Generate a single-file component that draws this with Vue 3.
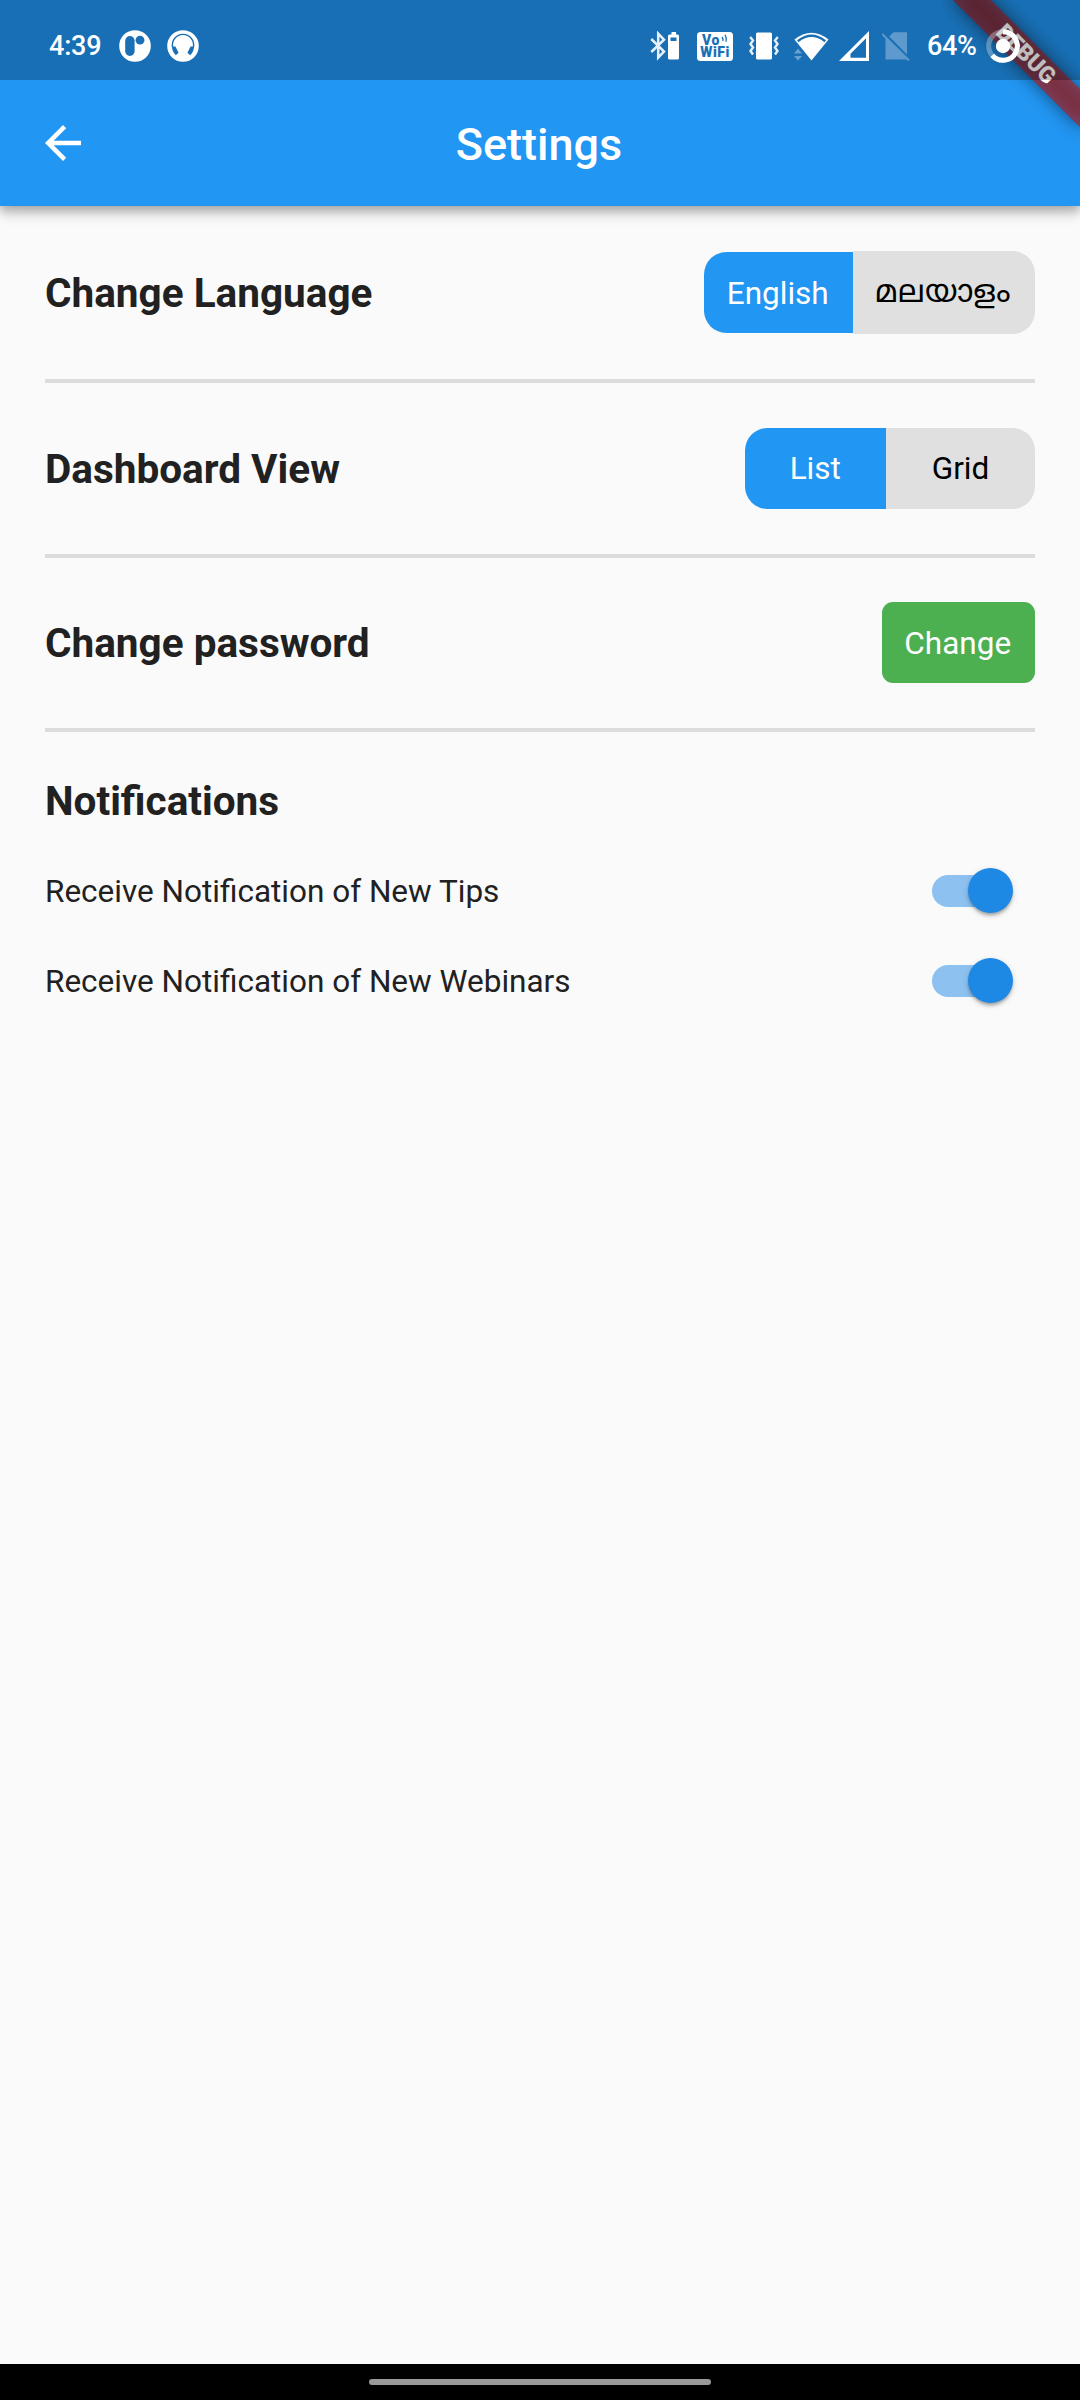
<script setup>
import { ref } from 'vue'

const language = ref('en')
const view = ref('list')
const notifications = ref([
  { id: 'tips', label: 'Receive Notification of New Tips', on: true },
  { id: 'webinars', label: 'Receive Notification of New Webinars', on: true },
])
</script>

<template>
  <div class="screen">
    <div class="debug">
      <div class="banner"><span>DEBUG</span></div>
    </div>

    <div class="status">
      <span class="clock">4:39</span>
      <svg class="i-app" width="32" height="32" viewBox="0 0 32 32">
        <circle cx="16" cy="16" r="15.8" fill="#fff" />
        <rect x="6.2" y="6" width="9.4" height="20" rx="4.7" fill="#1a6fb5" />
        <circle cx="21" cy="10.2" r="4.4" fill="#1a6fb5" />
      </svg>
      <svg class="i-head" width="32" height="32" viewBox="0 0 32 32">
        <circle cx="16" cy="16" r="15.8" fill="#fff" />
        <path d="M5.6 17A10.6 10.6 0 1 1 26.4 17" fill="none" stroke="#1a6fb5" stroke-width="1.4" />
        <path d="M4.9 16.5L8.4 16.5L11.6 22.8L8.8 25.2Q5.2 22 4.9 16.5ZM27.1 16.5L23.6 16.5L20.4 22.8L23.2 25.2Q26.8 22 27.1 16.5Z" fill="#1a6fb5" />
      </svg>

      <div class="system">
        <svg width="30" height="30" viewBox="0 0 30 30">
          <path d="M1.3 8L14 20.5L8.2 26.6V2.6L14 8.6L1.3 21" fill="none" stroke="#e8f1f9" stroke-width="2.5" />
          <path d="M21.5 1h4.5v2.5h1.5a1.5 1.5 0 0 1 1.5 1.5v22a1.5 1.5 0 0 1-1.5 1.5h-8a1.5 1.5 0 0 1-1.5-1.5v-22a1.5 1.5 0 0 1 1.5-1.5h2z" fill="#fff" />
          <rect x="20.5" y="6.5" width="6" height="3.5" fill="#1a6fb5" />
        </svg>
        <div class="vowifi">
          <span>Vo<svg width="8" height="9" viewBox="0 0 8 9"><path d="M2 3q1.5 2 .8 4M5 .8q2.2 3.5 1 7" fill="none" stroke="#1a6fb5" stroke-width="1.3" /></svg></span>
          <span>WiFi</span>
        </div>
        <svg class="i-vib" width="30" height="30" viewBox="0 0 30 30">
          <rect x="7" y="1.5" width="16" height="27" rx="1.5" fill="#fff" />
          <path d="M1.2 6L4 9.5L1.5 13L4 16.5L1.5 20L4 23.5M28.8 6L26 9.5L28.5 13L26 16.5L28.5 20L26 23.5" fill="none" stroke="#e8f1f9" stroke-width="2.4" />
        </svg>
        <svg class="i-wifi" width="35" height="29" viewBox="0 0 35 29">
          <path d="M.5 7.5Q17.5-6.2 34.5 7.5L17.5 28.5Z" fill="#fff" />
          <path d="M3.8 9.2Q17.5-1.6 31.2 9.2" fill="none" stroke="#1a6fb5" stroke-width="2.4" />
          <path d="M0 21.5L4 16.5L8 21.5ZM0 24L4 28.5L8 24Z" fill="#6ba1cf" />
        </svg>
        <svg class="i-sig" width="30" height="30" viewBox="0 0 30 30">
          <path fill-rule="evenodd" d="M0 30H30V0ZM11.5 26.8V22.7L27 7.2V26.8Z" fill="#fff" />
        </svg>
        <svg class="i-nosim" width="28" height="30" viewBox="0 0 28 30">
          <path d="M3.5 28.5V6.8L25 28.5ZM7.2 5.6L11.5 1.2H25V23.4Z" fill="#5e9ace" />
          <path d="M.2 3L27 29.5" fill="none" stroke="#5e9ace" stroke-width="2" />
        </svg>
        <span class="pct">64%</span>
        <svg class="i-bat" width="34" height="34" viewBox="0 0 34 34">
          <circle cx="17" cy="17" r="14.3" fill="none" stroke="#fff" stroke-opacity=".3" stroke-width="5" />
          <path d="M17 2.7A14.3 14.3 0 1 1 6.2 26.4" fill="none" stroke="#fff" stroke-width="5" />
          <circle cx="17" cy="17" r="7.2" fill="#fff" />
        </svg>
      </div>
    </div>

    <header class="appbar">
      <svg class="back" width="36" height="36" viewBox="4 4 16 16">
        <path d="M20 11H7.83l5.59-5.59L12 4l-8 8 8 8 1.41-1.41L7.83 13H20v-2z" fill="#fff" />
      </svg>
      <h1>Settings</h1>
    </header>

    <main>
      <section class="row first">
        <h2>Change Language</h2>
        <div class="seg lang">
          <button :class="{ on: language === 'en' }" @click="language = 'en'">English</button>
          <button class="ml" :class="{ on: language === 'ml' }" @click="language = 'ml'">മലയാളം</button>
        </div>
      </section>
      <section class="row">
        <h2>Dashboard View</h2>
        <div class="seg dash">
          <button :class="{ on: view === 'list' }" @click="view = 'list'">List</button>
          <button :class="{ on: view === 'grid' }" @click="view = 'grid'">Grid</button>
        </div>
      </section>
      <section class="row">
        <h2>Change password</h2>
        <button class="change">Change</button>
      </section>
      <h2 class="notif">Notifications</h2>
      <label v-for="n in notifications" :key="n.id" class="item">
        <span>{{ n.label }}</span>
        <span class="switch" :class="{ off: !n.on }" @click="n.on = !n.on"><i></i></span>
      </label>
    </main>

    <footer><div></div></footer>
  </div>
</template>

<style>
body { margin: 0; }
</style>

<style scoped>
.screen {
  position: relative;
  display: flex;
  flex-direction: column;
  width: 1080px;
  height: 2400px;
  overflow: hidden;
  background: #fafafa;
  color: #212121;
  font-family: Roboto, "Noto Sans Malayalam", "Noto Sans", sans-serif;
}
h1, h2 { margin: 0; }
button { border: 0; padding: 0; margin: 0; font: inherit; }
svg { display: block; flex: none; }

.status {
  position: relative;
  z-index: 4;
  display: flex;
  align-items: center;
  box-sizing: border-box;
  height: 80px;
  padding: 12px 60px 0 49px;
  background: rgba(0, 0, 0, 0.255);
  color: #fff;
  font-size: 27px;
  font-weight: 500;
}
.clock { width: 70px; letter-spacing: -0.2px; }
.i-head { margin-left: 16px; }
.system { display: flex; align-items: center; margin-left: auto; }
.vowifi {
  display: flex;
  flex-direction: column;
  align-items: center;
  justify-content: center;
  box-sizing: border-box;
  width: 36px;
  height: 29px;
  margin-left: 17px;
  border-radius: 3.5px;
  background: #fff;
  color: #1a6fb5;
  font-size: 14px;
  font-weight: 900;
  line-height: 12.5px;
  letter-spacing: 0.5px;
}
.vowifi span { display: flex; }
.i-vib { margin-left: 16px; }
.i-wifi { margin-left: 14.5px; }
.i-sig { margin-left: 10.5px; }
.i-nosim { margin-left: 13px; }
.pct { margin-left: 17px; width: 51px; letter-spacing: -0.3px; }
.i-bat { margin-left: 8px; }

.appbar {
  position: relative;
  z-index: 1;
  display: flex;
  align-items: center;
  justify-content: center;
  box-sizing: border-box;
  height: 206px;
  margin-top: -80px;
  padding-top: 80px;
  background: #2196f3;
  box-shadow: 0 4px 9px rgba(0, 0, 0, 0.22), 0 9px 11px rgba(0, 0, 0, 0.11), 0 2px 22px rgba(0, 0, 0, 0.08);
  color: #fff;
}
.back { position: absolute; left: 45px; top: 125px; }
h1 { font-size: 45px; font-weight: 500; line-height: 54px; padding-top: 3px; padding-right: 2px; }

.debug {
  position: absolute;
  z-index: 3;
  top: 0;
  right: 0;
  width: 180px;
  height: 180px;
  overflow: hidden;
}
.banner {
  position: absolute;
  left: 90px;
  top: 63px;
  width: 180px;
  height: 27px;
  transform: rotate(45deg);
  transform-origin: 90px -63px;
  text-align: center;
  color: #fff;
  font-size: 22.95px;
  font-weight: 900;
  line-height: 27px;
}
.banner::before {
  content: "";
  position: absolute;
  inset: 0;
  background: rgba(0, 0, 0, 0.5);
  filter: blur(8.9px);
}
.banner::after {
  content: "";
  position: absolute;
  inset: 0;
  background: rgba(183, 28, 28, 0.627);
}
.banner span { position: relative; z-index: 1; }

main { flex: 1; padding: 0 45px; }
.row {
  display: flex;
  align-items: center;
  justify-content: space-between;
  box-sizing: border-box;
  height: 174.5px;
  border-bottom: 4px solid #dcdcdc;
}
.row.first { height: 177px; }
.row:not(.first) h2 { padding-top: 1px; }
h2 { font-size: 40.5px; font-weight: 700; line-height: 48px; }
.seg { display: flex; align-items: center; font-size: 31.5px; }
.seg button {
  height: 81px;
  background: #e0e0e0;
  color: #000;
  border-radius: 0 22.5px 22.5px 0;
}
.seg button:first-child { border-radius: 22.5px 0 0 22.5px; }
.seg button.on { background: #2196f3; color: #fff; }
.lang button { width: 148.5px; padding: 1px 1px 0 0; }
.lang button.ml { width: 182.5px; height: 83px; padding: 1px 2px 0 0; }
.dash button { width: 141.5px; }
.dash button:last-child { width: 149px; }
.change {
  width: 153px;
  height: 81px;
  padding: 1px 1.5px 0 0;
  border-radius: 11px;
  background: #4caf50;
  color: #fff;
  font-size: 31.5px;
}
.notif { margin-top: 45px; margin-bottom: 21px; }
.item {
  display: flex;
  align-items: center;
  justify-content: space-between;
  height: 90px;
  padding-right: 22.5px;
  font-size: 31.5px;
}
.switch {
  position: relative;
  display: flex;
  align-items: center;
  justify-content: flex-end;
  width: 81px;
  height: 45px;
  margin-bottom: 1px;
}
.switch::before {
  content: "";
  position: absolute;
  left: 0;
  top: 7px;
  width: 74px;
  height: 31.5px;
  border-radius: 16px;
  background: #8cc1f0;
}
.switch i {
  position: relative;
  width: 45px;
  height: 45px;
  border-radius: 50%;
  background: #1e88e5;
  box-shadow: 0 4px 4px -2px rgba(0, 0, 0, 0.2), 0 2px 3px rgba(0, 0, 0, 0.14), 0 2px 7px rgba(0, 0, 0, 0.12);
}
.switch.off { justify-content: flex-start; }

footer {
  display: flex;
  align-items: center;
  justify-content: center;
  height: 36px;
  background: #000;
}
footer div { width: 342px; height: 6px; border-radius: 3px; background: #999; }
</style>
